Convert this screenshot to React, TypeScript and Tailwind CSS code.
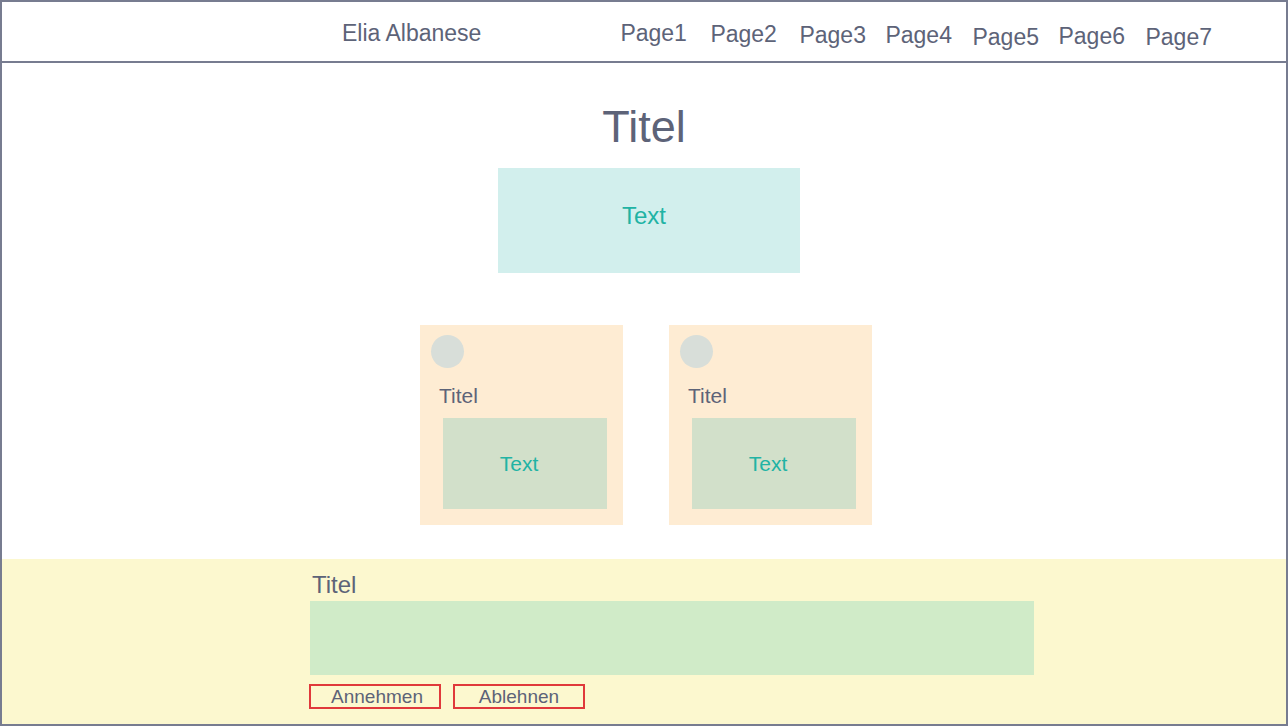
const pages = [
  { label: 'Page1', offset: 'ml-0 mt-0' },
  { label: 'Page2', offset: 'ml-[23.5px] mt-[1px]' },
  { label: 'Page3', offset: 'ml-[22.5px] mt-[2px]' },
  { label: 'Page4', offset: 'ml-[19.5px] mt-[2px]' },
  { label: 'Page5', offset: 'ml-[20.5px] mt-[4px]' },
  { label: 'Page6', offset: 'ml-[19.5px] mt-[3px]' },
  { label: 'Page7', offset: 'ml-[20.5px] mt-[4px]' },
]

function Card() {
  return (
    <div className="flex h-[200px] w-[203px] flex-col bg-[#feecd3] pl-[11px] pt-[10px]">
      <div className="h-[33px] w-[33px] rounded-full bg-[#d8ded9]" />
      <p className="ml-[8px] mt-[17px] text-[21px] leading-none text-[#5d6378]">Titel</p>
      <div className="ml-[12px] mt-[12px] flex h-[91px] w-[164px] items-center justify-center bg-[#d2e0ca] pr-[12px]">
        <span className="text-[21px] leading-none text-[#21b3a4]">Text</span>
      </div>
    </div>
  )
}

export default function App() {
  return (
    <div className="flex h-[726px] w-[1288px] flex-col border-2 border-[#777c90] bg-white font-['Liberation_Sans',Arial,sans-serif]">
      <header className="flex h-[61px] shrink-0 items-start border-b-2 border-[#777c90] pt-[20px] text-[23px] leading-none text-[#5d6378]">
        <span className="ml-[340px]">Elia Albanese</span>
        <nav className="ml-[139px] flex">
          {pages.map((page) => (
            <a key={page.label} className={page.offset}>
              {page.label}
            </a>
          ))}
        </nav>
      </header>

      <main className="flex flex-1 flex-col items-center">
        <h1 className="mt-[41px] text-[45px] leading-none text-[#5d6378]">Titel</h1>
        <div className="ml-[10px] mt-[19px] flex h-[105px] w-[302px] justify-center bg-[#d2efed] pr-[10px] pt-[36px]">
          <span className="text-[24px] leading-none text-[#21b3a4]">Text</span>
        </div>
        <div className="ml-[4px] mt-[52px] flex gap-[46px]">
          <Card />
          <Card />
        </div>
      </main>

      <footer className="flex h-[165px] shrink-0 flex-col bg-[#fcf8cf] pl-[308px] pt-[14px]">
        <p className="ml-[2px] text-[24px] leading-none text-[#5d6378]">Titel</p>
        <div className="mt-[4px] h-[74px] w-[724px] bg-[#d0ebc8]" />
        <div className="-ml-px mt-[9px] flex gap-[12px]">
          <button className="flex h-[25px] w-[132px] items-center justify-center border-2 border-[#e0393b] pl-[4px] text-[19px] leading-none text-[#5d6378]">
            Annehmen
          </button>
          <button className="flex h-[25px] w-[132px] items-center justify-center border-2 border-[#e0393b] text-[19px] leading-none text-[#5d6378]">
            Ablehnen
          </button>
        </div>
      </footer>
    </div>
  )
}
